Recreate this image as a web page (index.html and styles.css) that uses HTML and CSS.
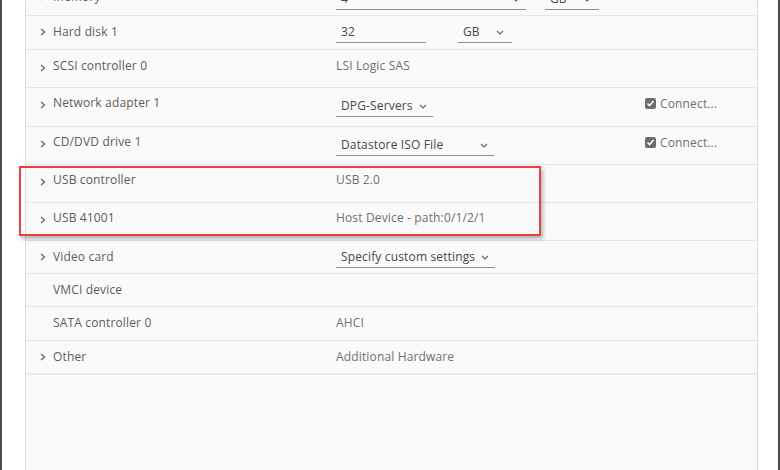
FILE: index.html
```html
<!DOCTYPE html>
<html lang="en">
<head>
  <meta charset="UTF-8" />
  <title>Virtual Hardware</title>
  <link rel="stylesheet" href="styles.css">
</head>
<body>

<div class="screen">
  <div class="panel">
    <div class="rows">

      <div class="row h35 top">
        <div class="label"><svg class="caret" viewBox="0 0 6 8"><path d="M1 1l3.5 3L1 7"/></svg>Memory</div>
        <div class="value">
          <div class="field w190"><span>4</span><svg class="chev" viewBox="0 0 8 5"><path d="M1 1l3 3 3-3"/></svg></div>
          <div class="field gb gb-mem"><span>GB</span><svg class="chev" viewBox="0 0 8 5"><path d="M1 1l3 3 3-3"/></svg></div>
        </div>
        <div></div>
      </div>

      <div class="row h34">
        <div class="label"><svg class="caret" viewBox="0 0 6 8"><path d="M1 1l3.5 3L1 7"/></svg>Hard disk 1</div>
        <div class="value">
          <div class="field w90"><span>32</span></div>
          <div class="field gb gb-disk"><span>GB</span><svg class="chev" viewBox="0 0 8 5"><path d="M1 1l3 3 3-3"/></svg></div>
        </div>
        <div></div>
      </div>

      <div class="row h38">
        <div class="label"><svg class="caret low" viewBox="0 0 6 8"><path d="M1 1l3.5 3L1 7"/></svg>SCSI controller 0</div>
        <div class="value text">LSI Logic SAS</div>
        <div></div>
      </div>

      <div class="row h39 up">
        <div class="label"><svg class="caret low" viewBox="0 0 6 8"><path d="M1 1l3.5 3L1 7"/></svg>Network adapter 1</div>
        <div class="value">
          <div class="field w97 drop"><span>DPG-Servers</span><svg class="chev" viewBox="0 0 8 5"><path d="M1 1l3 3 3-3"/></svg></div>
        </div>
        <div class="connect"><span class="check"><svg viewBox="0 0 11 11"><path d="M2.5 5.5l2 2 4-4.5"/></svg></span>Connect...</div>
      </div>

      <div class="row h38 up">
        <div class="label"><svg class="caret low" viewBox="0 0 6 8"><path d="M1 1l3.5 3L1 7"/></svg>CD/DVD drive 1</div>
        <div class="value">
          <div class="field w158 drop"><span>Datastore ISO File</span><svg class="chev" viewBox="0 0 8 5"><path d="M1 1l3 3 3-3"/></svg></div>
        </div>
        <div class="connect"><span class="check"><svg viewBox="0 0 11 11"><path d="M2.5 5.5l2 2 4-4.5"/></svg></span>Connect...</div>
      </div>

      <div class="row h38 up">
        <div class="label"><svg class="caret low" viewBox="0 0 6 8"><path d="M1 1l3.5 3L1 7"/></svg>USB controller</div>
        <div class="value text">USB 2.0</div>
        <div></div>
      </div>

      <div class="row h38 up">
        <div class="label"><svg class="caret low" viewBox="0 0 6 8"><path d="M1 1l3.5 3L1 7"/></svg>USB 41001</div>
        <div class="value text">Host Device - path:0/1/2/1</div>
        <div></div>
      </div>

      <div class="row h33">
        <div class="label"><svg class="caret" viewBox="0 0 6 8"><path d="M1 1l3.5 3L1 7"/></svg>Video card</div>
        <div class="value">
          <div class="field w159 drop"><span>Specify custom settings</span><svg class="chev" viewBox="0 0 8 5"><path d="M1 1l3 3 3-3"/></svg></div>
        </div>
        <div></div>
      </div>

      <div class="row h33">
        <div class="label"><span class="caret-space"></span>VMCI device</div>
        <div class="value"></div>
        <div></div>
      </div>

      <div class="row h34">
        <div class="label"><span class="caret-space"></span>SATA controller 0</div>
        <div class="value text">AHCI</div>
        <div></div>
      </div>

      <div class="row h34 last">
        <div class="label"><svg class="caret" viewBox="0 0 6 8"><path d="M1 1l3.5 3L1 7"/></svg>Other</div>
        <div class="value text">Additional Hardware</div>
        <div></div>
      </div>

    </div>
  </div>

  <div class="highlight"></div>
</div>

</body>
</html>
```

FILE: styles.css
```css
body {
  margin: 0;
  width: 780px;
  height: 470px;
  overflow: hidden;
  background: #fff;
  font-family: "Open Sans", Lato, sans-serif;
  font-size: 12px;
  letter-spacing: 0.15px;
  color: #5c5c5c;
}
.screen {
  position: relative;
  height: 470px;
  box-sizing: border-box;
  border-left: 2px solid #4b4b4b;
  border-right: 2px solid #4b4b4b;
  padding-left: 23px;
  padding-right: 20px;
}
.panel {
  height: 100%;
  background: #fafafa;
  border-left: 1px solid #dcdcdc;
  border-right: 1px solid #dcdcdc;
  overflow: hidden;
}
.rows {
  margin-top: -19px;
}
.row {
  display: grid;
  grid-template-columns: 310px 309px 1fr;
  align-items: start;
  box-sizing: border-box;
  padding-top: 8px;
  border-bottom: 1px solid #e6e6e6;
  white-space: nowrap;
}
.row.up { padding-top: 7px; }
.row.last { border-bottom: 2px solid #e9e9e9; }
.h33 { height: 33px; }
.h34 { height: 34px; }
.h35 { height: 35px; }
.h38 { height: 38px; }
.h39 { height: 39px; }

.label {
  display: flex;
  align-items: center;
  height: 16px;
  line-height: 16px;
  padding-left: 14px;
}
.caret {
  width: 6px;
  height: 8px;
  margin-right: 7px;
  fill: none;
  stroke: #666;
  stroke-width: 1.3;
}
.caret.low { margin-top: 4px; }
.caret-space {
  display: inline-block;
  width: 13px;
}

.value {
  display: flex;
  align-items: flex-start;
  line-height: 16px;
}
.value.text { color: #707070; }
.field {
  display: flex;
  justify-content: space-between;
  align-items: center;
  box-sizing: border-box;
  height: 19px;
  padding: 0 6px 2px 5px;
  line-height: 16px;
  border-bottom: 1px solid #8e8e8e;
  color: #474747;
}
.up .field { margin-top: 3px; }
.top .field { margin-top: 2px; }
.chev {
  flex-shrink: 0;
  width: 8px;
  height: 5px;
  fill: none;
  stroke: #666;
  stroke-width: 1.1;
}
.w190 { width: 190px; }
.w90 { width: 90px; }
.w97 { width: 97px; }
.w158 { width: 158px; }
.w159 { width: 159px; }
.gb { width: 54px; padding-right: 8px; }
.gb-mem { margin-left: 19px; }
.gb-disk { margin-left: 32px; }
.drop .chev { margin-left: 4px; }

.connect {
  display: flex;
  align-items: center;
  height: 16px;
  color: #707070;
}
.check {
  display: inline-flex;
  width: 11px;
  height: 11px;
  margin-right: 4px;
  border-radius: 2px;
  background: #6b6b6b;
}
.check svg {
  width: 11px;
  height: 11px;
  fill: none;
  stroke: #fff;
  stroke-width: 1.6;
}

.highlight {
  position: absolute;
  left: 17px;
  top: 166px;
  width: 518px;
  height: 66px;
  border: 2px solid #e8413f;
  box-shadow: 2px 3px 4px rgba(0, 0, 0, 0.28);
}
```
